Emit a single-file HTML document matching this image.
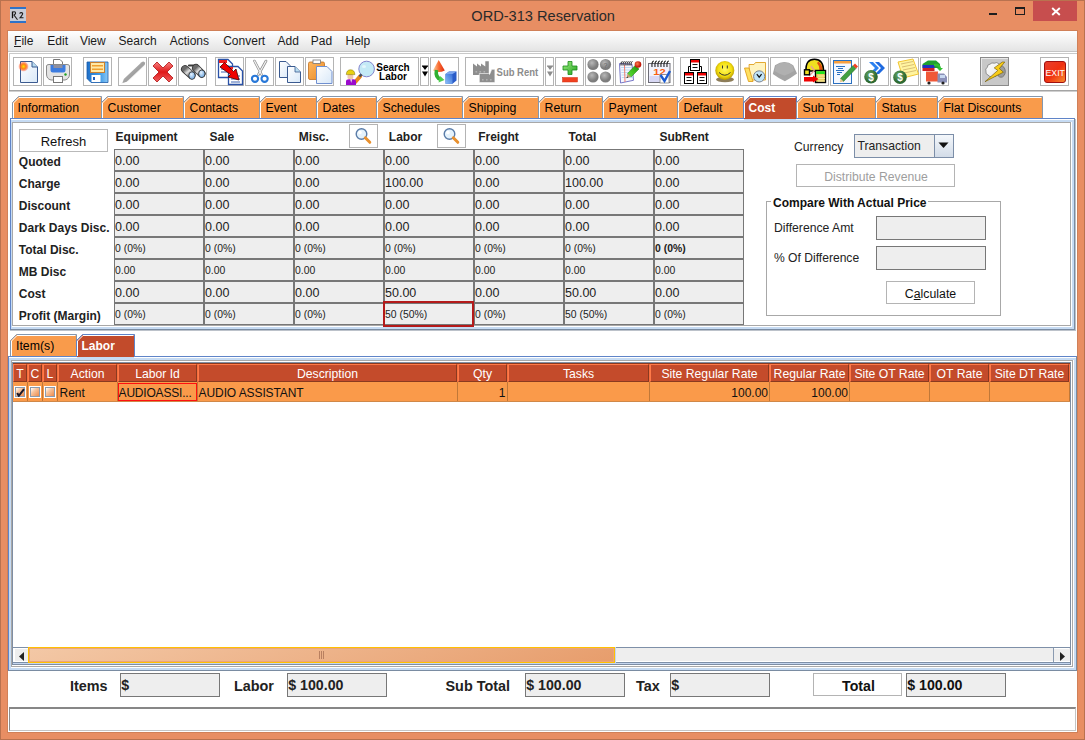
<!DOCTYPE html><html><head><meta charset="utf-8"><style>

*{box-sizing:border-box;margin:0;padding:0}
html,body{width:1085px;height:740px;overflow:hidden}
body{position:relative;background:#E88E63;font-family:"Liberation Sans",sans-serif;font-size:12px;color:#000}
.ab{position:absolute}
.t{position:absolute;white-space:nowrap;line-height:1}
.btn{position:absolute;border:1px solid #B4B4B4;background:#fff}

</style></head><body>
<div class="ab" style="left:0px;top:0px;width:1085px;height:1px;background:#B9724F"></div>
<div class="ab" style="left:0px;top:0px;width:1px;height:740px;background:#B9724F"></div>
<div class="ab" style="left:1084px;top:0px;width:1px;height:740px;background:#B9724F"></div>
<div class="ab" style="left:0px;top:739px;width:1085px;height:1px;background:#B9724F"></div>
<div class="ab" style="left:7px;top:30px;width:1px;height:703px;background:#D08058"></div>
<div class="ab" style="left:7px;top:30px;width:1071px;height:1px;background:#D08058"></div>
<div class="ab" style="left:1077px;top:30px;width:1px;height:703px;background:#D08058"></div>
<div class="ab" style="left:7px;top:732px;width:1071px;height:1px;background:#D08058"></div>
<svg class="ab" style="left:10px;top:7px" width="16" height="16" viewBox="0 0 16 16"><rect x="0" y="0" width="16" height="16" fill="#C8CCD6"/><rect x="0" y="0" width="16" height="2" fill="#2E72C8"/><rect x="0" y="14" width="16" height="2" fill="#2E72C8"/><path d="M2.5 4.5 V11.2" stroke="#111" stroke-width="1.3"/><path d="M2.8 5 Q6 4.2 5.5 6.8 L4 8 L7.5 12.8" fill="none" stroke="#222" stroke-width="1.1"/><path d="M9.5 6.5 Q11 4.8 12.6 6.2 Q13 7.5 10 10.8 H13.5" fill="none" stroke="#1A1A1A" stroke-width="1.1"/></svg>
<div class="t" style="left:471.3px;top:8.84px;font-size:14.6px;font-weight:400;color:#2A2A2A;">ORD-313 Reservation</div>
<div class="ab" style="left:989px;top:13px;width:8px;height:2px;background:#1E1E1E"></div>
<div class="ab" style="left:1015px;top:7px;width:10px;height:8px;border:1px solid #1E1E1E;border-top-width:2px"></div>
<div class="ab" style="left:1033px;top:1px;width:44px;height:20px;background:#C74E4E"></div>
<svg class="ab" style="left:1050px;top:6px" width="12" height="11" viewBox="0 0 12 11"><path d="M2.2 2 L9.8 9 M9.8 2 L2.2 9" stroke="#fff" stroke-width="1.9"/></svg>
<div class="ab" style="left:8px;top:31px;width:1069px;height:701px;background:#fff"></div>
<div class="ab" style="left:8px;top:31px;width:1069px;height:20px;background:linear-gradient(#FFFFFF,#E4E4E4)"></div>
<div class="ab" style="left:8px;top:51px;width:1069px;height:1px;background:#C4C4C4"></div>
<div class="t" style="left:14.1px;top:35.04px;font-size:12px;font-weight:400;color:#1A1A1A;">File</div>
<div class="t" style="left:47.300000000000004px;top:35.04px;font-size:12px;font-weight:400;color:#1A1A1A;">Edit</div>
<div class="t" style="left:79.9px;top:35.04px;font-size:12px;font-weight:400;color:#1A1A1A;">View</div>
<div class="t" style="left:118.60000000000001px;top:35.04px;font-size:12px;font-weight:400;color:#1A1A1A;">Search</div>
<div class="t" style="left:169.7px;top:35.04px;font-size:12px;font-weight:400;color:#1A1A1A;">Actions</div>
<div class="t" style="left:223.2px;top:35.04px;font-size:12px;font-weight:400;color:#1A1A1A;">Convert</div>
<div class="t" style="left:277.59999999999997px;top:35.04px;font-size:12px;font-weight:400;color:#1A1A1A;">Add</div>
<div class="t" style="left:310.8px;top:35.04px;font-size:12px;font-weight:400;color:#1A1A1A;">Pad</div>
<div class="t" style="left:345.5px;top:35.04px;font-size:12px;font-weight:400;color:#1A1A1A;">Help</div>
<div class="ab" style="left:14px;top:46px;width:7px;height:1px;background:#1A1A1A"></div>
<div class="ab" style="left:9px;top:53px;width:1068px;height:38px;border:1px solid #C9C9C9;border-right:none;border-bottom:none;background:#fff"></div>
<div class="ab" style="left:9px;top:90px;width:1068px;height:1px;background:#A4A4A4"></div>
<div class="ab" style="left:9px;top:91px;width:1068px;height:1px;background:#CFCFCF"></div>
<div class="ab" style="left:13px;top:57px;width:29px;height:29px;border:1px solid #B4B4B4;background:#fff"></div>
<div class="ab" style="left:43px;top:57px;width:29px;height:29px;border:1px solid #B4B4B4;background:#fff"></div>
<div class="ab" style="left:83px;top:57px;width:29px;height:29px;border:1px solid #B4B4B4;background:#fff"></div>
<div class="ab" style="left:118px;top:57px;width:29px;height:29px;border:1px solid #B4B4B4;background:#fff"></div>
<div class="ab" style="left:148px;top:57px;width:29px;height:29px;border:1px solid #B4B4B4;background:#fff"></div>
<div class="ab" style="left:178px;top:57px;width:29px;height:29px;border:1px solid #B4B4B4;background:#fff"></div>
<div class="ab" style="left:215px;top:57px;width:29px;height:29px;border:1px solid #B4B4B4;background:#fff"></div>
<div class="ab" style="left:245px;top:57px;width:29px;height:29px;border:1px solid #B4B4B4;background:#fff"></div>
<div class="ab" style="left:275px;top:57px;width:29px;height:29px;border:1px solid #B4B4B4;background:#fff"></div>
<div class="ab" style="left:305px;top:57px;width:29px;height:29px;border:1px solid #B4B4B4;background:#fff"></div>
<div class="ab" style="left:430px;top:57px;width:29px;height:29px;border:1px solid #B4B4B4;background:#fff"></div>
<div class="ab" style="left:555px;top:57px;width:29px;height:29px;border:1px solid #B4B4B4;background:#fff"></div>
<div class="ab" style="left:585px;top:57px;width:29px;height:29px;border:1px solid #B4B4B4;background:#fff"></div>
<div class="ab" style="left:615px;top:57px;width:29px;height:29px;border:1px solid #B4B4B4;background:#fff"></div>
<div class="ab" style="left:645px;top:57px;width:29px;height:29px;border:1px solid #B4B4B4;background:#fff"></div>
<div class="ab" style="left:680px;top:57px;width:29px;height:29px;border:1px solid #B4B4B4;background:#fff"></div>
<div class="ab" style="left:710px;top:57px;width:29px;height:29px;border:1px solid #B4B4B4;background:#fff"></div>
<div class="ab" style="left:740px;top:57px;width:29px;height:29px;border:1px solid #B4B4B4;background:#fff"></div>
<div class="ab" style="left:770px;top:57px;width:29px;height:29px;border:1px solid #B4B4B4;background:#fff"></div>
<div class="ab" style="left:800px;top:57px;width:29px;height:29px;border:1px solid #B4B4B4;background:#fff"></div>
<div class="ab" style="left:830px;top:57px;width:29px;height:29px;border:1px solid #B4B4B4;background:#fff"></div>
<div class="ab" style="left:860px;top:57px;width:29px;height:29px;border:1px solid #B4B4B4;background:#fff"></div>
<div class="ab" style="left:890px;top:57px;width:29px;height:29px;border:1px solid #B4B4B4;background:#fff"></div>
<div class="ab" style="left:920px;top:57px;width:29px;height:29px;border:1px solid #B4B4B4;background:#fff"></div>
<div class="ab" style="left:1040px;top:57px;width:29px;height:29px;border:1px solid #B4B4B4;background:#fff"></div>
<div class="ab" style="left:340px;top:57px;width:79px;height:29px;border:1px solid #B4B4B4;background:#fff"></div>
<div class="ab" style="left:420px;top:57px;width:9px;height:29px;border:1px solid #B4B4B4;background:#fff"></div>
<div class="ab" style="left:465px;top:57px;width:79px;height:29px;border:1px solid #B4B4B4;background:#fff"></div>
<div class="ab" style="left:545px;top:57px;width:9px;height:29px;border:1px solid #B4B4B4;background:#fff"></div>
<div class="ab" style="left:980px;top:57px;width:29px;height:29px;border:1px solid #8A8A8A;background:#C8C8C8;box-shadow:inset 1px 1px 0 #E8E8E8"></div>
<svg class="ab" style="left:0;top:0" width="1085" height="95" viewBox="0 0 1085 95">
<defs>
<linearGradient id="gPage" x1="0" y1="0" x2="1" y2="1"><stop offset="0" stop-color="#FFFFFF"/><stop offset="1" stop-color="#D8E8F8"/></linearGradient>
<radialGradient id="gStar"><stop offset="0" stop-color="#FFE000"/><stop offset="0.5" stop-color="#FF8020"/><stop offset="1" stop-color="#FF4020" stop-opacity="0.2"/></radialGradient>
<linearGradient id="gBlue" x1="0" y1="0" x2="1" y2="0"><stop offset="0" stop-color="#1E6FC8"/><stop offset="0.6" stop-color="#3C9AE8"/><stop offset="1" stop-color="#8CC8F4"/></linearGradient>
<linearGradient id="gRed" x1="0" y1="0" x2="0" y2="1"><stop offset="0" stop-color="#F88080"/><stop offset="0.5" stop-color="#E01818"/><stop offset="1" stop-color="#F06060"/></linearGradient>
<linearGradient id="gGray" x1="0" y1="0" x2="0" y2="1"><stop offset="0" stop-color="#A8A8A8"/><stop offset="1" stop-color="#7A7A7A"/></linearGradient>
<radialGradient id="gLens" cx="0.4" cy="0.35"><stop offset="0" stop-color="#E8F4FF"/><stop offset="1" stop-color="#88B8E8"/></radialGradient>
<radialGradient id="gBall" cx="0.4" cy="0.35"><stop offset="0" stop-color="#B8B8B8"/><stop offset="1" stop-color="#7C7C7C"/></radialGradient>
<radialGradient id="gSmile" cx="0.5" cy="0.45" r="0.55"><stop offset="0" stop-color="#FFF860"/><stop offset="0.65" stop-color="#F4E010"/><stop offset="1" stop-color="#B89800"/></radialGradient>
<radialGradient id="gCoin" cx="0.4" cy="0.35"><stop offset="0" stop-color="#6AAA6A"/><stop offset="1" stop-color="#2E6A32"/></radialGradient>
<linearGradient id="gExit" x1="0" y1="0" x2="1" y2="1"><stop offset="0" stop-color="#E84030"/><stop offset="0.5" stop-color="#F03010"/><stop offset="1" stop-color="#F89030"/></linearGradient>
<linearGradient id="gOrange" x1="0" y1="0" x2="1" y2="1"><stop offset="0" stop-color="#FFB860"/><stop offset="1" stop-color="#E88A28"/></linearGradient>
<linearGradient id="gGreen" x1="0" y1="0" x2="1" y2="1"><stop offset="0" stop-color="#A0F080"/><stop offset="1" stop-color="#20A020"/></linearGradient>
<linearGradient id="gPen" x1="0" y1="0" x2="1" y2="1"><stop offset="0" stop-color="#C8C8C8"/><stop offset="1" stop-color="#7E7E7E"/></linearGradient>
<linearGradient id="gBino" x1="0" y1="0" x2="1" y2="1"><stop offset="0" stop-color="#6A6A6A"/><stop offset="0.45" stop-color="#E0E0E0"/><stop offset="1" stop-color="#555"/></linearGradient>
<linearGradient id="gCloud" x1="0" y1="0" x2="1" y2="0"><stop offset="0" stop-color="#FFFFFF"/><stop offset="0.55" stop-color="#E8E8E8"/><stop offset="0.7" stop-color="#9A9A9A"/><stop offset="1" stop-color="#B8B8B8"/></linearGradient>
<linearGradient id="gCone" x1="0" y1="0" x2="1" y2="0"><stop offset="0" stop-color="#FFD0A0"/><stop offset="0.5" stop-color="#F86A30"/><stop offset="1" stop-color="#E02A10"/></linearGradient>
<linearGradient id="gCube" x1="0" y1="1" x2="1" y2="0"><stop offset="0" stop-color="#8CC0F8"/><stop offset="1" stop-color="#3A70D8"/></linearGradient>
<linearGradient id="gPencil" x1="0" y1="1" x2="1" y2="0"><stop offset="0" stop-color="#60E040"/><stop offset="0.5" stop-color="#40C020"/><stop offset="1" stop-color="#1E8A10"/></linearGradient>
<radialGradient id="gEraser" cx="0.4" cy="0.4"><stop offset="0" stop-color="#FF8050"/><stop offset="1" stop-color="#C01808"/></radialGradient>
<linearGradient id="gCloud2" x1="0" y1="0" x2="1" y2="1"><stop offset="0" stop-color="#FFFFFF"/><stop offset="0.6" stop-color="#F0F0F0"/><stop offset="1" stop-color="#C8C8C8"/></linearGradient>
</defs>
<path d="M20.5 61.5 H32 L37.5 67 V82.5 H20.5 Z" fill="url(#gPage)" stroke="#3A5A90" stroke-width="1"/>
<path d="M32 61.5 V67 H37.5" fill="#B8DCF0" stroke="#3A5A90" stroke-width="1"/>
<circle cx="23.5" cy="66.5" r="5" fill="url(#gStar)"/>
<path d="M53.5 59.5 H60 L62.5 62 V68 H53.5 Z" fill="#fff" stroke="#777" stroke-width="1"/>
<path d="M46.5 66 Q46.5 64.5 49 64.5 H67 Q69.5 64.5 69.5 66 V74 Q69.5 79 65 80 H51 Q46.5 79 46.5 74 Z" fill="#E4E4E4" stroke="#8A8A8A" stroke-width="1"/>
<path d="M50.5 65 H65.5 V70 Q65.5 72.5 63 72.5 H53 Q50.5 72.5 50.5 70 Z" fill="#3C7CE0"/>
<rect x="53.5" y="65" width="9" height="3" fill="#9090A0"/>
<rect x="53.5" y="76.5" width="9" height="6" fill="#fff" stroke="#777" stroke-width="1"/>
<circle cx="65.5" cy="74.5" r="1.2" fill="#20A020"/>
<path d="M87 62 H108 V82.5 H91 L87 78.5 Z" fill="url(#gBlue)" stroke="#1A5AA8" stroke-width="0.8"/>
<rect x="90.5" y="62.5" width="14" height="10" fill="#FFE9A8" stroke="#C88030" stroke-width="1"/>
<rect x="92" y="65" width="11" height="1.5" fill="#F0A030"/><rect x="92" y="68.5" width="11" height="1.5" fill="#F0A030"/>
<rect x="91.5" y="75" width="9" height="7" fill="#fff"/><rect x="93" y="77" width="2" height="3" fill="#1E60C0"/>
<path d="M121 84 L125 78 L141 63 Q143 61.5 144.5 63 Q146 64.5 144.5 66 L128.5 81 Z" fill="#E4E4E4" opacity="0.6"/>
<path d="M122.5 83 L123.8 79 L141.6 62.2 Q143.4 60.8 144.6 62.2 Q145.8 63.6 144.4 65 L126.6 81.8 Z" fill="url(#gPen)"/>
<path d="M153 66 L157 62 L163 68 L169 62 L173 66 L167 72 L173 78 L169 82 L163 76 L157 82 L153 78 L159 72 Z" fill="url(#gRed)" stroke="#B01010" stroke-width="0.8"/>
<path d="M185 69.2 L191.5 75" stroke="#333" stroke-width="8" stroke-linecap="round"/>
<path d="M185 69.2 L191.5 75" stroke="url(#gBino)" stroke-width="6.4" stroke-linecap="round"/>
<path d="M189 65.5 L197 65.5" stroke="#3A3A3A" stroke-width="2.2" stroke-linecap="round"/>
<path d="M196 68 L201.5 73.5" stroke="#333" stroke-width="8" stroke-linecap="round"/>
<path d="M196 68 L201.5 73.5" stroke="url(#gBino)" stroke-width="6.4" stroke-linecap="round"/>
<ellipse cx="192" cy="75.6" rx="3.2" ry="3.8" fill="url(#gLens)" stroke="#2A2A2A" stroke-width="0.8"/>
<ellipse cx="201.8" cy="73.8" rx="3.2" ry="3.8" fill="url(#gLens)" stroke="#2A2A2A" stroke-width="0.8"/>
<path d="M218.5 59.5 H228 L232.5 64 V77.5 H218.5 Z" fill="#fff" stroke="#2A52A8" stroke-width="1.3"/>
<rect x="219" y="60" width="8" height="3" fill="#F02020"/>
<path d="M221 66 H229 M221 69 H229 M221 72 H227" stroke="#2A52A8" stroke-width="0.9"/>
<path d="M228.5 66.5 H238 L242.5 71 V84.5 H228.5 Z" fill="#fff" stroke="#2A52A8" stroke-width="1.3"/>
<rect x="229" y="67" width="4" height="2.5" fill="#F02020"/>
<path d="M231 76 H240 M231 79 H240 M231 82 H240" stroke="#2A52A8" stroke-width="0.9"/>
<path d="M220 67 L224.5 62.5 L233.5 71.5 L236 69 L239 80 L228 77 L230.5 74.5 Z" fill="#F00000" stroke="#400" stroke-width="0.8"/>
<path d="M254.5 61 L261.5 74.5 M266 61 L258.5 74.5" stroke="#8C8C8C" stroke-width="2.6" stroke-linecap="round"/>
<path d="M254.5 61 L261.5 74.5 M266 61 L258.5 74.5" stroke="#F4F4F4" stroke-width="1.2" stroke-linecap="round"/>
<circle cx="255" cy="78.8" r="3.1" fill="none" stroke="#2878D8" stroke-width="2.1"/>
<circle cx="264.6" cy="78.8" r="3.1" fill="none" stroke="#2878D8" stroke-width="2.1"/>
<path d="M279.5 61.5 H286 L290 65.5 V77.5 H279.5 Z" fill="url(#gPage)" stroke="#3A5A90" stroke-width="1"/>
<path d="M287.5 66.5 H295 L300.5 72 V82.5 H287.5 Z" fill="url(#gPage)" stroke="#3A5A90" stroke-width="1"/>
<path d="M295 66.5 V72 H300.5" fill="#B8DCF0" stroke="#3A5A90" stroke-width="0.8"/>
<rect x="308.5" y="62" width="16" height="17.5" rx="1.5" fill="url(#gOrange)" stroke="#C07020" stroke-width="0.8"/>
<rect x="313" y="60" width="7.5" height="3.5" fill="#fff" stroke="#777" stroke-width="0.8"/>
<path d="M316.5 66.5 H327 L332 71.5 V83.5 H316.5 Z" fill="url(#gPage)" stroke="#7090D0" stroke-width="1"/>
<circle cx="366.6" cy="69" r="7.8" fill="#C4EAF6" stroke="#7878C8" stroke-width="0.9"/>
<ellipse cx="364" cy="66.5" rx="2" ry="1.5" fill="#E4F6FC"/>
<path d="M355 82.3 L360.2 76.3" stroke="#E8861E" stroke-width="4" stroke-linecap="round"/>
<path d="M359.5 76.5 L361.5 74.3" stroke="#445060" stroke-width="2.4"/>
<path d="M346 85 V81.2 Q346 79.2 349 79.2 H353.5 Q356 79.2 356 81.2 V85 Z" fill="#9A0ACC"/>
<path d="M350.2 79.3 L351.2 83 L352.2 79.3 Z" fill="#E8E8E8"/>
<rect x="347.5" y="74" width="5.8" height="5" rx="1.5" fill="#F0C8A8"/>
<path d="M346.3 74.6 Q346.5 69.8 350.5 69.8 Q354.6 69.8 354.9 74.6 Z" fill="#E8D010" stroke="#807000" stroke-width="0.5"/>
<text x="393" y="70.6" font-family="Liberation Sans" font-weight="bold" font-size="10" text-anchor="middle" fill="#000">Search</text>
<text x="393" y="79.6" font-family="Liberation Sans" font-weight="bold" font-size="10" text-anchor="middle" fill="#000">Labor</text>
<path d="M422 66 H428 L425 70 Z M422 71.5 H428 L425 76.5 Z" fill="#000"/>
<rect x="422" y="65.5" width="6" height="1" fill="#000"/>
<path d="M438.7 60 L444.8 70.5 Q438.7 73.5 433 70.5 Z" fill="url(#gCone)"/>
<path d="M436.5 70 Q435 77.5 441 79.5" fill="none" stroke="#30B030" stroke-width="3.6"/>
<path d="M440 76 L444.5 80 L438.5 82.5 Z" fill="#50D050"/>
<path d="M445.5 74 L449 71.5 H456.5 V80.5 L452.5 83.8 H445.5 Z" fill="#2A5CC8"/>
<path d="M445.5 74 H452.5 V83.8 H445.5 Z" fill="url(#gCube)"/>
<path d="M445.5 74 L449 71.5 H456.5 L452.5 74 Z" fill="#7EA8F0"/>
<path d="M473 75 V63.4 L477 66.6 V63.4 L481 66.6 V63.4 L485.3 66.6 V61.2 H488.8 V75 Z" fill="#8E8E8E"/>
<path d="M479.3 82.6 V73.5 L488.6 73.5 L489.6 74.4 L491.7 69.3 H494.9 V82.6 Z" fill="#8E8E8E" stroke="#fff" stroke-width="0.6"/>
<rect x="475.5" y="71" width="1.6" height="1.6" fill="#B0B0B0"/>
<rect x="479.5" y="71" width="1.6" height="1.6" fill="#B0B0B0"/>
<rect x="483.5" y="71" width="1.6" height="1.6" fill="#B0B0B0"/>
<rect x="482" y="79" width="1.6" height="1.6" fill="#B0B0B0"/>
<rect x="486" y="79" width="1.6" height="1.6" fill="#B0B0B0"/>
<rect x="490" y="79" width="1.6" height="1.6" fill="#B0B0B0"/>
<text x="496.6" y="76.2" font-family="Liberation Sans" font-weight="bold" font-size="10.5" fill="#8C8C8C" textLength="41.6" lengthAdjust="spacingAndGlyphs">Sub Rent</text>
<path d="M547 66 H553 L550 70 Z M547 71.5 H553 L550 76.5 Z" fill="#8C8C8C"/>
<rect x="547" y="65.5" width="6" height="1" fill="#8C8C8C"/>
<path d="M568 61.5 H572 V66 H577 V70 H572 V74.5 H568 V70 H563 V66 H568 Z" fill="url(#gGreen)" stroke="#1A8A1A" stroke-width="0.8"/>
<rect x="562.5" y="77.5" width="15" height="4.5" fill="#F04020" stroke="#D03010" stroke-width="0.5"/>
<circle cx="593" cy="64.5" r="5.6" fill="url(#gBall)"/>
<circle cx="605.5" cy="64.5" r="5.6" fill="url(#gBall)"/>
<circle cx="593" cy="77" r="5.6" fill="url(#gBall)"/>
<circle cx="605.5" cy="77" r="5.6" fill="url(#gBall)"/>
<text x="605.5" y="67.5" font-family="Liberation Sans" font-size="7" text-anchor="middle" fill="#666">?</text>
<path d="M619.5 63.5 L632 64.3 L633.5 80.3 L620.5 83 Z" fill="#F6F8FF" stroke="#7878C8" stroke-width="1"/>
<path d="M621 67.5 H632 M621.2 70 H632.3 M621.4 72.5 H632.5 M621.6 75 H632.8 M621.8 77.5 H633" stroke="#B0D4F0" stroke-width="0.8"/>
<path d="M624.5 65 L625 82" stroke="#F07060" stroke-width="0.9"/>
<path d="M621 65.5 Q620.5 61.5 622.5 61.5" fill="none" stroke="#1A1A1A" stroke-width="1"/>
<path d="M623 65.5 Q622.5 61.5 624.5 61.5" fill="none" stroke="#1A1A1A" stroke-width="1"/>
<path d="M625 65.5 Q624.5 61.5 626.5 61.5" fill="none" stroke="#1A1A1A" stroke-width="1"/>
<path d="M627 65.5 Q626.5 61.5 628.5 61.5" fill="none" stroke="#1A1A1A" stroke-width="1"/>
<path d="M629 65.5 Q628.5 61.5 630.5 61.5" fill="none" stroke="#1A1A1A" stroke-width="1"/>
<path d="M631 65.5 Q630.5 61.5 632.5 61.5" fill="none" stroke="#1A1A1A" stroke-width="1"/>
<path d="M627.5 73.5 L635 65.5 L639 69 L631 77 Z" fill="url(#gPencil)" stroke="#1E7A10" stroke-width="0.5"/>
<path d="M627.5 73.5 L631 77 L626.5 78 Z" fill="#C8A070"/>
<path d="M626.3 78.2 L627.2 76.4 L628.2 77.5 Z" fill="#222"/>
<circle cx="638" cy="64.5" r="3.3" fill="url(#gEraser)"/>
<rect x="648.5" y="63.5" width="21.5" height="19" fill="#F2F2FC" stroke="#6E6E78" stroke-width="1"/>
<rect x="649.5" y="76" width="10" height="6" fill="#D8D8F4"/>
<path d="M652 67 Q651.5 61 654 61" fill="none" stroke="#222" stroke-width="1.1"/>
<path d="M655 67 Q654.5 61 657 61" fill="none" stroke="#222" stroke-width="1.1"/>
<path d="M658 67 Q657.5 61 660 61" fill="none" stroke="#222" stroke-width="1.1"/>
<path d="M661 67 Q660.5 61 663 61" fill="none" stroke="#222" stroke-width="1.1"/>
<path d="M664 67 Q663.5 61 666 61" fill="none" stroke="#222" stroke-width="1.1"/>
<path d="M667 67 Q666.5 61 669 61" fill="none" stroke="#222" stroke-width="1.1"/>
<text x="659.5" y="75.2" font-family="Liberation Sans" font-weight="bold" font-size="9.5" text-anchor="middle" fill="#F86010" textLength="12.5" lengthAdjust="spacingAndGlyphs">12</text>
<rect x="660" y="74.5" width="9" height="8.5" fill="#fff" stroke="#808080" stroke-width="0.8"/>
<path d="M660.5 75 L664.5 81 L670 71" fill="none" stroke="#1A5AD0" stroke-width="2.4"/>
<path d="M688.5 73 V66.5 H701.5 V73" fill="none" stroke="#000" stroke-width="1"/>
<rect x="690.5" y="59.5" width="9" height="11" fill="#fff" stroke="#000" stroke-width="1"/>
<rect x="691.0" y="60.0" width="8" height="2.5" fill="#F00000"/>
<path d="M692.5 64.5 H697.5 M692.5 67.5 H697.5" stroke="#111" stroke-width="1"/>
<rect x="684.5" y="72.5" width="9" height="11" fill="#fff" stroke="#000" stroke-width="1"/>
<rect x="685.0" y="73.0" width="8" height="2.5" fill="#F00000"/>
<path d="M686.5 77.5 H691.5 M686.5 80.5 H691.5" stroke="#111" stroke-width="1"/>
<rect x="697.5" y="72.5" width="9" height="11" fill="#fff" stroke="#000" stroke-width="1"/>
<rect x="698.0" y="73.0" width="8" height="2.5" fill="#F00000"/>
<path d="M699.5 77.5 H704.5 M699.5 80.5 H704.5" stroke="#111" stroke-width="1"/>
<ellipse cx="725" cy="79.5" rx="9" ry="2.8" fill="#503800" opacity="0.65"/>
<circle cx="724.8" cy="70.4" r="9.5" fill="url(#gSmile)"/>
<path d="M722.5 65.5 V68.5 M727.3 65.5 V68.5" stroke="#333" stroke-width="1"/>
<path d="M719 72.5 Q724.8 78 730.5 72.5" fill="none" stroke="#333" stroke-width="1"/>
<path d="M749 64.5 H754 L755.5 62.5 H765.5 V80 H750 Z" fill="#FFF4C0" stroke="#E0A020" stroke-width="0.9"/>
<path d="M744.5 68 H749 L753 81.5 H748.5 Z" fill="#FFE060" stroke="#E0A020" stroke-width="0.9"/>
<circle cx="759.2" cy="76.4" r="5.6" fill="#C0E4F8" stroke="#707888" stroke-width="0.9"/>
<path d="M756.8 74.2 L759.2 77.2 L761.6 74.2" fill="none" stroke="#111" stroke-width="1.2"/>
<path d="M775 65.3 Q780 62 784.4 62 Q789 62 793.2 65.3 L797 73.6 Q791 78 784.9 81.3 Q778 78 772.8 74.1 Z" fill="#A4A4A4"/>
<path d="M776 65.5 Q780 62.5 784.4 62.5 Q789 62.5 792.5 65.5 L794 71 Q789 74 784.5 75.5 Q779 74 774.5 71 Z" fill="#B0B0B0"/>
<path d="M806 71 Q805.5 59.2 814.5 59.2 Q823.5 59.2 823.5 71 Z" fill="#F0E020" stroke="#000" stroke-width="1.6"/>
<path d="M818.5 61.5 Q822.5 64.5 822.5 70 L819.5 70 Q819.5 65.5 817 63 Z" fill="#E05010"/>
<path d="M811 66 L814.5 70.5 L809 76" fill="none" stroke="#E8A098" stroke-width="1.3"/>
<rect x="804.5" y="69.8" width="5" height="5" fill="#F0E020" stroke="#000" stroke-width="1.4"/>
<rect x="815.5" y="70.5" width="10" height="12" fill="#E8D060" stroke="#000" stroke-width="1.4"/>
<rect x="816.2" y="71.2" width="8.6" height="2.8" fill="#20E020"/>
<path d="M818 76 H825 M818 78.5 H825 M818 81 H825" stroke="#F8E8A0" stroke-width="1"/>
<path d="M804 77 H813 V75.5 L818.5 79 L813 82.5 V81.5 H804 Z" fill="#F00000"/>
<rect x="833.5" y="60.5" width="18" height="23" fill="#F4F8FF" stroke="#2A70C0" stroke-width="1"/>
<rect x="834" y="61" width="17" height="2.5" fill="#F8A040"/>
<path d="M836 66.5 H845 M838 68.5 H843 M836 70.5 H844 M837 72.5 H842 M837 74.5 H840" stroke="#2A70C0" stroke-width="1"/>
<path d="M840.5 78.5 L853 65.5 L856 68.5 L843.5 81.5 Z" fill="#40A040" stroke="#206020" stroke-width="0.5"/>
<path d="M840.5 78.5 L843.5 81.5 L839.8 82.3 Z" fill="#E8C890"/>
<path d="M853 65.5 L855 63.5 L858 66.5 L856 68.5 Z" fill="#F04020"/>
<path d="M875 62 L879 62 L885 68 L879 74 L875 74 L881 68 Z" fill="#1E6AE0"/>
<path d="M869 62 L873 62 L879 68 L873 74 L869 74 L875 68 Z" fill="#2A80F0"/>
<circle cx="871" cy="76.8" r="6.8" fill="url(#gCoin)"/>
<text x="871" y="80.5" font-family="Liberation Sans" font-weight="bold" font-size="10" text-anchor="middle" fill="#fff">$</text>
<path d="M898 62 L913 59 L918.5 74 L903 78 Z" fill="#FFF4A0" stroke="#F0C020" stroke-width="0.9"/>
<path d="M901 64 L913 61.5 M902 67 L914 64.5 M903 70 L915 67.5 M904 73 L916 70.5" stroke="#C8A860" stroke-width="0.7"/>
<circle cx="900" cy="77.2" r="6.8" fill="url(#gCoin)"/>
<text x="900" y="81" font-family="Liberation Sans" font-weight="bold" font-size="10" text-anchor="middle" fill="#fff">$</text>
<path d="M922.5 64 L928 60.5 H936 L940 64 V68 H922.5 Z" fill="#20A030"/>
<rect x="922.5" y="65" width="12" height="3" fill="#2030C0"/>
<rect x="922.5" y="68" width="12" height="3" fill="#D02020"/>
<path d="M934 64 Q940 63 941 68 L943 68 L940 71 L937 68 L939 68 Q938 66 934 66 Z" fill="#30C030"/>
<rect x="926" y="71.5" width="12" height="10" fill="#F05838"/>
<path d="M937.5 73.5 H944 L947 77 V82.5 H937.5 Z" fill="#8A90B8"/>
<rect x="940" y="75" width="5" height="3" fill="#C8D8F0"/>
<circle cx="929" cy="83" r="1.6" fill="#222"/><circle cx="943" cy="83" r="1.6" fill="#222"/>
<ellipse cx="1001" cy="71.5" rx="4.3" ry="5.8" fill="#9C9C9C" stroke="#555" stroke-width="0.6"/>
<path d="M987.5 67 Q987 64.5 990 64.2 Q991.5 62.3 994.5 63.2 Q996.5 61.8 998.5 63.5 Q1000.5 64.5 999.5 67.5 L998 74 Q996.5 77 993 76.8 Q989.5 77.5 988 75 Q985.3 74 986 71.5 Q984.8 69 987.5 67 Z" fill="url(#gCloud2)" stroke="#555" stroke-width="0.6"/>
<path d="M1002.3 62 H1004.8 L999.4 68.6 L1003.4 72.2 L985 81.7 L997.8 70.4 L994.2 67.9 Z" fill="#F8CC18" stroke="#6A5200" stroke-width="0.6" stroke-linejoin="round"/>
<rect x="1044.5" y="61.5" width="21" height="21" rx="2.5" fill="url(#gExit)" stroke="#A01010" stroke-width="1"/>
<text x="1055.2" y="75.8" font-family="Liberation Sans" font-size="9" text-anchor="middle" fill="#fff" textLength="19.4" lengthAdjust="spacingAndGlyphs">EXIT</text>
</svg>
<div class="ab" style="left:10px;top:118px;width:1065px;height:212px;background:#C6DBF3;border-left:1px solid #5F84C8;border-top:1px solid #5F84C8;border-right:1px solid #7A8CA2;border-bottom:1px solid #7A8CA2"></div>
<div class="ab" style="left:11px;top:119px;width:1063px;height:1px;background:#fff"></div>
<div class="ab" style="left:10px;top:330px;width:1066px;height:1px;background:#BCC2CA"></div>
<div class="ab" style="left:1075px;top:119px;width:1px;height:212px;background:#BCC2CA"></div>
<div class="ab" style="left:12px;top:122px;width:1060px;height:205px;background:#fff"></div>
<div class="ab" style="left:12px;top:122px;width:1059px;height:204px;border:1px solid #A8A8A8;background:#fff"></div>
<svg class="ab" style="left:12px;top:96px" width="90" height="22" viewBox="0 0 90 22"><path d="M0.5 22 V6.5 L6.5 0.5 H89.5 V22" fill="#F99B4B" stroke="#8497AE" stroke-width="1"/><path d="M1.5 22 V7 L7 1.5 H88.5" fill="none" stroke="#FFFFFF" stroke-width="1"/></svg>
<div class="t" style="left:17.5px;top:101.79px;font-size:12.3px;font-weight:400;color:#000;">Information</div>
<svg class="ab" style="left:101px;top:96px" width="83" height="22" viewBox="0 0 83 22"><path d="M0.5 22 V6.5 L6.5 0.5 H82.5 V22" fill="#F99B4B" stroke="#8497AE" stroke-width="1"/><path d="M1.5 22 V7 L7 1.5 H81.5" fill="none" stroke="#FFFFFF" stroke-width="1"/></svg>
<div class="t" style="left:107.5px;top:101.79px;font-size:12.3px;font-weight:400;color:#000;">Customer</div>
<svg class="ab" style="left:183px;top:96px" width="77" height="22" viewBox="0 0 77 22"><path d="M0.5 22 V6.5 L6.5 0.5 H76.5 V22" fill="#F99B4B" stroke="#8497AE" stroke-width="1"/><path d="M1.5 22 V7 L7 1.5 H75.5" fill="none" stroke="#FFFFFF" stroke-width="1"/></svg>
<div class="t" style="left:189.5px;top:101.79px;font-size:12.3px;font-weight:400;color:#000;">Contacts</div>
<svg class="ab" style="left:259px;top:96px" width="58" height="22" viewBox="0 0 58 22"><path d="M0.5 22 V6.5 L6.5 0.5 H57.5 V22" fill="#F99B4B" stroke="#8497AE" stroke-width="1"/><path d="M1.5 22 V7 L7 1.5 H56.5" fill="none" stroke="#FFFFFF" stroke-width="1"/></svg>
<div class="t" style="left:265.5px;top:101.79px;font-size:12.3px;font-weight:400;color:#000;">Event</div>
<svg class="ab" style="left:316px;top:96px" width="61" height="22" viewBox="0 0 61 22"><path d="M0.5 22 V6.5 L6.5 0.5 H60.5 V22" fill="#F99B4B" stroke="#8497AE" stroke-width="1"/><path d="M1.5 22 V7 L7 1.5 H59.5" fill="none" stroke="#FFFFFF" stroke-width="1"/></svg>
<div class="t" style="left:322.5px;top:101.79px;font-size:12.3px;font-weight:400;color:#000;">Dates</div>
<svg class="ab" style="left:376px;top:96px" width="87" height="22" viewBox="0 0 87 22"><path d="M0.5 22 V6.5 L6.5 0.5 H86.5 V22" fill="#F99B4B" stroke="#8497AE" stroke-width="1"/><path d="M1.5 22 V7 L7 1.5 H85.5" fill="none" stroke="#FFFFFF" stroke-width="1"/></svg>
<div class="t" style="left:382.5px;top:101.79px;font-size:12.3px;font-weight:400;color:#000;">Schedules</div>
<svg class="ab" style="left:462px;top:96px" width="77" height="22" viewBox="0 0 77 22"><path d="M0.5 22 V6.5 L6.5 0.5 H76.5 V22" fill="#F99B4B" stroke="#8497AE" stroke-width="1"/><path d="M1.5 22 V7 L7 1.5 H75.5" fill="none" stroke="#FFFFFF" stroke-width="1"/></svg>
<div class="t" style="left:468.5px;top:101.79px;font-size:12.3px;font-weight:400;color:#000;">Shipping</div>
<svg class="ab" style="left:538px;top:96px" width="65" height="22" viewBox="0 0 65 22"><path d="M0.5 22 V6.5 L6.5 0.5 H64.5 V22" fill="#F99B4B" stroke="#8497AE" stroke-width="1"/><path d="M1.5 22 V7 L7 1.5 H63.5" fill="none" stroke="#FFFFFF" stroke-width="1"/></svg>
<div class="t" style="left:544.5px;top:101.79px;font-size:12.3px;font-weight:400;color:#000;">Return</div>
<svg class="ab" style="left:602px;top:96px" width="76" height="22" viewBox="0 0 76 22"><path d="M0.5 22 V6.5 L6.5 0.5 H75.5 V22" fill="#F99B4B" stroke="#8497AE" stroke-width="1"/><path d="M1.5 22 V7 L7 1.5 H74.5" fill="none" stroke="#FFFFFF" stroke-width="1"/></svg>
<div class="t" style="left:608.5px;top:101.79px;font-size:12.3px;font-weight:400;color:#000;">Payment</div>
<svg class="ab" style="left:677px;top:96px" width="67" height="22" viewBox="0 0 67 22"><path d="M0.5 22 V6.5 L6.5 0.5 H66.5 V22" fill="#F99B4B" stroke="#8497AE" stroke-width="1"/><path d="M1.5 22 V7 L7 1.5 H65.5" fill="none" stroke="#FFFFFF" stroke-width="1"/></svg>
<div class="t" style="left:683.5px;top:101.79px;font-size:12.3px;font-weight:400;color:#000;">Default</div>
<svg class="ab" style="left:743px;top:96px" width="54" height="23" viewBox="0 0 54 23"><path d="M0.5 23 V6.5 L6.5 0.5 H53.5 V23" fill="#C24B2B" stroke="#5F84C8" stroke-width="1"/><path d="M1.5 23 V7 L7 1.5 H52.5" fill="none" stroke="#FFFFFF" stroke-width="1"/></svg>
<div class="t" style="left:748.5px;top:102.04px;font-size:12px;font-weight:700;color:#fff;">Cost</div>
<div class="ab" style="left:744px;top:118px;width:52px;height:1px;background:#C24B2B"></div>
<div class="ab" style="left:744px;top:119px;width:52px;height:3px;background:#C6DBF3"></div>
<svg class="ab" style="left:796px;top:96px" width="80" height="22" viewBox="0 0 80 22"><path d="M0.5 22 V6.5 L6.5 0.5 H79.5 V22" fill="#F99B4B" stroke="#8497AE" stroke-width="1"/><path d="M1.5 22 V7 L7 1.5 H78.5" fill="none" stroke="#FFFFFF" stroke-width="1"/></svg>
<div class="t" style="left:802.5px;top:101.79px;font-size:12.3px;font-weight:400;color:#000;">Sub Total</div>
<svg class="ab" style="left:875px;top:96px" width="63" height="22" viewBox="0 0 63 22"><path d="M0.5 22 V6.5 L6.5 0.5 H62.5 V22" fill="#F99B4B" stroke="#8497AE" stroke-width="1"/><path d="M1.5 22 V7 L7 1.5 H61.5" fill="none" stroke="#FFFFFF" stroke-width="1"/></svg>
<div class="t" style="left:881.5px;top:101.79px;font-size:12.3px;font-weight:400;color:#000;">Status</div>
<svg class="ab" style="left:937px;top:96px" width="106" height="22" viewBox="0 0 106 22"><path d="M0.5 22 V6.5 L6.5 0.5 H105.5 V22" fill="#F99B4B" stroke="#8497AE" stroke-width="1"/><path d="M1.5 22 V7 L7 1.5 H104.5" fill="none" stroke="#FFFFFF" stroke-width="1"/></svg>
<div class="t" style="left:943.5px;top:101.79px;font-size:12.3px;font-weight:400;color:#000;">Flat Discounts</div>
<div class="ab" style="left:19px;top:129px;width:89px;height:23px;border:1px solid #B9B9B9;background:#fff"></div>
<div class="t" style="left:19.0px;width:89px;text-align:center;top:135.20px;font-size:13px;font-weight:400;color:#111;">Refresh</div>
<div class="t" style="left:115.60000000000001px;top:131.04px;font-size:12px;font-weight:700;color:#222;">Equipment</div>
<div class="t" style="left:209.4px;top:131.04px;font-size:12px;font-weight:700;color:#222;">Sale</div>
<div class="t" style="left:298.79999999999995px;top:131.04px;font-size:12px;font-weight:700;color:#222;">Misc.</div>
<div class="t" style="left:388.79999999999995px;top:131.04px;font-size:12px;font-weight:700;color:#222;">Labor</div>
<div class="t" style="left:478.2px;top:131.04px;font-size:12px;font-weight:700;color:#222;">Freight</div>
<div class="t" style="left:568.6px;top:131.04px;font-size:12px;font-weight:700;color:#222;">Total</div>
<div class="t" style="left:659.4px;top:131.04px;font-size:12px;font-weight:700;color:#222;">SubRent</div>
<div class="ab" style="left:349px;top:124px;width:29px;height:24px;border:1px solid #B4B4B4;background:#fff"></div>
<svg class="ab" style="left:354px;top:127px" width="19" height="18" viewBox="0 0 19 18"><circle cx="7.5" cy="7" r="5.3" fill="#E4F2FC" stroke="#5A7CA8" stroke-width="1.4"/><circle cx="6" cy="5.5" r="1.8" fill="#fff"/><path d="M11.3 10.8 L15.8 15.3" stroke="#E8902E" stroke-width="3" stroke-linecap="round"/></svg>
<div class="ab" style="left:437px;top:124px;width:29px;height:24px;border:1px solid #B4B4B4;background:#fff"></div>
<svg class="ab" style="left:442px;top:127px" width="19" height="18" viewBox="0 0 19 18"><circle cx="7.5" cy="7" r="5.3" fill="#E4F2FC" stroke="#5A7CA8" stroke-width="1.4"/><circle cx="6" cy="5.5" r="1.8" fill="#fff"/><path d="M11.3 10.8 L15.8 15.3" stroke="#E8902E" stroke-width="3" stroke-linecap="round"/></svg>
<div class="t" style="left:18.8px;top:156.04px;font-size:12px;font-weight:700;color:#222;">Quoted</div>
<div class="ab" style="left:114px;top:149px;width:90px;height:22px;border:1px solid #777;background:#EEEEEE"></div>
<div class="t" style="left:115px;top:154.62px;font-size:12.5px;font-weight:400;color:#222;">0.00</div>
<div class="ab" style="left:204px;top:149px;width:90px;height:22px;border:1px solid #777;background:#EEEEEE"></div>
<div class="t" style="left:205px;top:154.62px;font-size:12.5px;font-weight:400;color:#222;">0.00</div>
<div class="ab" style="left:294px;top:149px;width:90px;height:22px;border:1px solid #777;background:#EEEEEE"></div>
<div class="t" style="left:295px;top:154.62px;font-size:12.5px;font-weight:400;color:#222;">0.00</div>
<div class="ab" style="left:384px;top:149px;width:90px;height:22px;border:1px solid #777;background:#EEEEEE"></div>
<div class="t" style="left:385px;top:154.62px;font-size:12.5px;font-weight:400;color:#222;">0.00</div>
<div class="ab" style="left:474px;top:149px;width:90px;height:22px;border:1px solid #777;background:#EEEEEE"></div>
<div class="t" style="left:475px;top:154.62px;font-size:12.5px;font-weight:400;color:#222;">0.00</div>
<div class="ab" style="left:564px;top:149px;width:90px;height:22px;border:1px solid #777;background:#EEEEEE"></div>
<div class="t" style="left:565px;top:154.62px;font-size:12.5px;font-weight:400;color:#222;">0.00</div>
<div class="ab" style="left:654px;top:149px;width:90px;height:22px;border:1px solid #777;background:#EEEEEE"></div>
<div class="t" style="left:655px;top:154.62px;font-size:12.5px;font-weight:400;color:#222;">0.00</div>
<div class="t" style="left:18.8px;top:178.04px;font-size:12px;font-weight:700;color:#222;">Charge</div>
<div class="ab" style="left:114px;top:171px;width:90px;height:22px;border:1px solid #777;background:#EEEEEE"></div>
<div class="t" style="left:115px;top:176.62px;font-size:12.5px;font-weight:400;color:#222;">0.00</div>
<div class="ab" style="left:204px;top:171px;width:90px;height:22px;border:1px solid #777;background:#EEEEEE"></div>
<div class="t" style="left:205px;top:176.62px;font-size:12.5px;font-weight:400;color:#222;">0.00</div>
<div class="ab" style="left:294px;top:171px;width:90px;height:22px;border:1px solid #777;background:#EEEEEE"></div>
<div class="t" style="left:295px;top:176.62px;font-size:12.5px;font-weight:400;color:#222;">0.00</div>
<div class="ab" style="left:384px;top:171px;width:90px;height:22px;border:1px solid #777;background:#EEEEEE"></div>
<div class="t" style="left:385px;top:176.62px;font-size:12.5px;font-weight:400;color:#222;">100.00</div>
<div class="ab" style="left:474px;top:171px;width:90px;height:22px;border:1px solid #777;background:#EEEEEE"></div>
<div class="t" style="left:475px;top:176.62px;font-size:12.5px;font-weight:400;color:#222;">0.00</div>
<div class="ab" style="left:564px;top:171px;width:90px;height:22px;border:1px solid #777;background:#EEEEEE"></div>
<div class="t" style="left:565px;top:176.62px;font-size:12.5px;font-weight:400;color:#222;">100.00</div>
<div class="ab" style="left:654px;top:171px;width:90px;height:22px;border:1px solid #777;background:#EEEEEE"></div>
<div class="t" style="left:655px;top:176.62px;font-size:12.5px;font-weight:400;color:#222;">0.00</div>
<div class="t" style="left:18.8px;top:200.04px;font-size:12px;font-weight:700;color:#222;">Discount</div>
<div class="ab" style="left:114px;top:193px;width:90px;height:22px;border:1px solid #777;background:#EEEEEE"></div>
<div class="t" style="left:115px;top:198.62px;font-size:12.5px;font-weight:400;color:#222;">0.00</div>
<div class="ab" style="left:204px;top:193px;width:90px;height:22px;border:1px solid #777;background:#EEEEEE"></div>
<div class="t" style="left:205px;top:198.62px;font-size:12.5px;font-weight:400;color:#222;">0.00</div>
<div class="ab" style="left:294px;top:193px;width:90px;height:22px;border:1px solid #777;background:#EEEEEE"></div>
<div class="t" style="left:295px;top:198.62px;font-size:12.5px;font-weight:400;color:#222;">0.00</div>
<div class="ab" style="left:384px;top:193px;width:90px;height:22px;border:1px solid #777;background:#EEEEEE"></div>
<div class="t" style="left:385px;top:198.62px;font-size:12.5px;font-weight:400;color:#222;">0.00</div>
<div class="ab" style="left:474px;top:193px;width:90px;height:22px;border:1px solid #777;background:#EEEEEE"></div>
<div class="t" style="left:475px;top:198.62px;font-size:12.5px;font-weight:400;color:#222;">0.00</div>
<div class="ab" style="left:564px;top:193px;width:90px;height:22px;border:1px solid #777;background:#EEEEEE"></div>
<div class="t" style="left:565px;top:198.62px;font-size:12.5px;font-weight:400;color:#222;">0.00</div>
<div class="ab" style="left:654px;top:193px;width:90px;height:22px;border:1px solid #777;background:#EEEEEE"></div>
<div class="t" style="left:655px;top:198.62px;font-size:12.5px;font-weight:400;color:#222;">0.00</div>
<div class="t" style="left:18.8px;top:222.04px;font-size:12px;font-weight:700;color:#222;">Dark Days Disc.</div>
<div class="ab" style="left:114px;top:215px;width:90px;height:22px;border:1px solid #777;background:#EEEEEE"></div>
<div class="t" style="left:115px;top:220.62px;font-size:12.5px;font-weight:400;color:#222;">0.00</div>
<div class="ab" style="left:204px;top:215px;width:90px;height:22px;border:1px solid #777;background:#EEEEEE"></div>
<div class="t" style="left:205px;top:220.62px;font-size:12.5px;font-weight:400;color:#222;">0.00</div>
<div class="ab" style="left:294px;top:215px;width:90px;height:22px;border:1px solid #777;background:#EEEEEE"></div>
<div class="t" style="left:295px;top:220.62px;font-size:12.5px;font-weight:400;color:#222;">0.00</div>
<div class="ab" style="left:384px;top:215px;width:90px;height:22px;border:1px solid #777;background:#EEEEEE"></div>
<div class="t" style="left:385px;top:220.62px;font-size:12.5px;font-weight:400;color:#222;">0.00</div>
<div class="ab" style="left:474px;top:215px;width:90px;height:22px;border:1px solid #777;background:#EEEEEE"></div>
<div class="t" style="left:475px;top:220.62px;font-size:12.5px;font-weight:400;color:#222;">0.00</div>
<div class="ab" style="left:564px;top:215px;width:90px;height:22px;border:1px solid #777;background:#EEEEEE"></div>
<div class="t" style="left:565px;top:220.62px;font-size:12.5px;font-weight:400;color:#222;">0.00</div>
<div class="ab" style="left:654px;top:215px;width:90px;height:22px;border:1px solid #777;background:#EEEEEE"></div>
<div class="t" style="left:655px;top:220.62px;font-size:12.5px;font-weight:400;color:#222;">0.00</div>
<div class="t" style="left:18.8px;top:244.04px;font-size:12px;font-weight:700;color:#222;">Total Disc.</div>
<div class="ab" style="left:114px;top:237px;width:90px;height:22px;border:1px solid #777;background:#EEEEEE"></div>
<div class="t" style="left:115px;top:244.40px;font-size:10.4px;font-weight:400;color:#222;">0 (0%)</div>
<div class="ab" style="left:204px;top:237px;width:90px;height:22px;border:1px solid #777;background:#EEEEEE"></div>
<div class="t" style="left:205px;top:244.40px;font-size:10.4px;font-weight:400;color:#222;">0 (0%)</div>
<div class="ab" style="left:294px;top:237px;width:90px;height:22px;border:1px solid #777;background:#EEEEEE"></div>
<div class="t" style="left:295px;top:244.40px;font-size:10.4px;font-weight:400;color:#222;">0 (0%)</div>
<div class="ab" style="left:384px;top:237px;width:90px;height:22px;border:1px solid #777;background:#EEEEEE"></div>
<div class="t" style="left:385px;top:244.40px;font-size:10.4px;font-weight:400;color:#222;">0 (0%)</div>
<div class="ab" style="left:474px;top:237px;width:90px;height:22px;border:1px solid #777;background:#EEEEEE"></div>
<div class="t" style="left:475px;top:244.40px;font-size:10.4px;font-weight:400;color:#222;">0 (0%)</div>
<div class="ab" style="left:564px;top:237px;width:90px;height:22px;border:1px solid #777;background:#EEEEEE"></div>
<div class="t" style="left:565px;top:244.40px;font-size:10.4px;font-weight:400;color:#222;">0 (0%)</div>
<div class="ab" style="left:654px;top:237px;width:90px;height:22px;border:1px solid #777;background:#EEEEEE"></div>
<div class="t" style="left:655px;top:244.40px;font-size:10.4px;font-weight:700;color:#222;">0 (0%)</div>
<div class="t" style="left:18.8px;top:266.04px;font-size:12px;font-weight:700;color:#222;">MB Disc</div>
<div class="ab" style="left:114px;top:259px;width:90px;height:22px;border:1px solid #777;background:#EEEEEE"></div>
<div class="t" style="left:115px;top:266.40px;font-size:10.4px;font-weight:400;color:#222;">0.00</div>
<div class="ab" style="left:204px;top:259px;width:90px;height:22px;border:1px solid #777;background:#EEEEEE"></div>
<div class="t" style="left:205px;top:266.40px;font-size:10.4px;font-weight:400;color:#222;">0.00</div>
<div class="ab" style="left:294px;top:259px;width:90px;height:22px;border:1px solid #777;background:#EEEEEE"></div>
<div class="t" style="left:295px;top:266.40px;font-size:10.4px;font-weight:400;color:#222;">0.00</div>
<div class="ab" style="left:384px;top:259px;width:90px;height:22px;border:1px solid #777;background:#EEEEEE"></div>
<div class="t" style="left:385px;top:266.40px;font-size:10.4px;font-weight:400;color:#222;">0.00</div>
<div class="ab" style="left:474px;top:259px;width:90px;height:22px;border:1px solid #777;background:#EEEEEE"></div>
<div class="t" style="left:475px;top:266.40px;font-size:10.4px;font-weight:400;color:#222;">0.00</div>
<div class="ab" style="left:564px;top:259px;width:90px;height:22px;border:1px solid #777;background:#EEEEEE"></div>
<div class="t" style="left:565px;top:266.40px;font-size:10.4px;font-weight:400;color:#222;">0.00</div>
<div class="ab" style="left:654px;top:259px;width:90px;height:22px;border:1px solid #777;background:#EEEEEE"></div>
<div class="t" style="left:655px;top:266.40px;font-size:10.4px;font-weight:400;color:#222;">0.00</div>
<div class="t" style="left:18.8px;top:288.04px;font-size:12px;font-weight:700;color:#222;">Cost</div>
<div class="ab" style="left:114px;top:281px;width:90px;height:22px;border:1px solid #777;background:#EEEEEE"></div>
<div class="t" style="left:115px;top:286.62px;font-size:12.5px;font-weight:400;color:#222;">0.00</div>
<div class="ab" style="left:204px;top:281px;width:90px;height:22px;border:1px solid #777;background:#EEEEEE"></div>
<div class="t" style="left:205px;top:286.62px;font-size:12.5px;font-weight:400;color:#222;">0.00</div>
<div class="ab" style="left:294px;top:281px;width:90px;height:22px;border:1px solid #777;background:#EEEEEE"></div>
<div class="t" style="left:295px;top:286.62px;font-size:12.5px;font-weight:400;color:#222;">0.00</div>
<div class="ab" style="left:384px;top:281px;width:90px;height:22px;border:1px solid #777;background:#EEEEEE"></div>
<div class="t" style="left:385px;top:286.62px;font-size:12.5px;font-weight:400;color:#222;">50.00</div>
<div class="ab" style="left:474px;top:281px;width:90px;height:22px;border:1px solid #777;background:#EEEEEE"></div>
<div class="t" style="left:475px;top:286.62px;font-size:12.5px;font-weight:400;color:#222;">0.00</div>
<div class="ab" style="left:564px;top:281px;width:90px;height:22px;border:1px solid #777;background:#EEEEEE"></div>
<div class="t" style="left:565px;top:286.62px;font-size:12.5px;font-weight:400;color:#222;">50.00</div>
<div class="ab" style="left:654px;top:281px;width:90px;height:22px;border:1px solid #777;background:#EEEEEE"></div>
<div class="t" style="left:655px;top:286.62px;font-size:12.5px;font-weight:400;color:#222;">0.00</div>
<div class="t" style="left:18.8px;top:310.04px;font-size:12px;font-weight:700;color:#222;">Profit (Margin)</div>
<div class="ab" style="left:114px;top:303px;width:90px;height:22px;border:1px solid #777;background:#EEEEEE"></div>
<div class="t" style="left:115px;top:310.40px;font-size:10.4px;font-weight:400;color:#222;">0 (0%)</div>
<div class="ab" style="left:204px;top:303px;width:90px;height:22px;border:1px solid #777;background:#EEEEEE"></div>
<div class="t" style="left:205px;top:310.40px;font-size:10.4px;font-weight:400;color:#222;">0 (0%)</div>
<div class="ab" style="left:294px;top:303px;width:90px;height:22px;border:1px solid #777;background:#EEEEEE"></div>
<div class="t" style="left:295px;top:310.40px;font-size:10.4px;font-weight:400;color:#222;">0 (0%)</div>
<div class="ab" style="left:384px;top:303px;width:90px;height:22px;border:1px solid #777;background:#EEEEEE"></div>
<div class="t" style="left:385px;top:310.40px;font-size:10.4px;font-weight:400;color:#222;">50 (50%)</div>
<div class="ab" style="left:474px;top:303px;width:90px;height:22px;border:1px solid #777;background:#EEEEEE"></div>
<div class="t" style="left:475px;top:310.40px;font-size:10.4px;font-weight:400;color:#222;">0 (0%)</div>
<div class="ab" style="left:564px;top:303px;width:90px;height:22px;border:1px solid #777;background:#EEEEEE"></div>
<div class="t" style="left:565px;top:310.40px;font-size:10.4px;font-weight:400;color:#222;">50 (50%)</div>
<div class="ab" style="left:654px;top:303px;width:90px;height:22px;border:1px solid #777;background:#EEEEEE"></div>
<div class="t" style="left:655px;top:310.40px;font-size:10.4px;font-weight:400;color:#222;">0 (0%)</div>
<div class="ab" style="left:383px;top:301px;width:91px;height:26px;border:2px solid #B41A1A"></div>
<div class="t" style="left:794px;top:140.87px;font-size:12.2px;font-weight:400;color:#222;">Currency</div>
<div class="ab" style="left:854px;top:134px;width:100px;height:24px;border:1px solid #7C8EA8;background:#EEEEEE"></div>
<div class="ab" style="left:934px;top:135px;width:19px;height:22px;border-left:1px solid #7C8EA8;background:linear-gradient(#F4F7FB,#D3DCE8)"></div>
<svg class="ab" style="left:938px;top:142px" width="11" height="7" viewBox="0 0 11 7"><path d="M0.5 0.5 H10.5 L5.5 6 Z" fill="#111"/></svg>
<div class="t" style="left:857.5px;top:139.87px;font-size:12.2px;font-weight:400;color:#222;">Transaction</div>
<div class="ab" style="left:796px;top:164px;width:159px;height:23px;border:1px solid #B4B4B4;background:#fff"></div>
<div class="t" style="left:796.0px;width:160px;text-align:center;top:170.87px;font-size:12.2px;font-weight:400;color:#9E9E9E;">Distribute Revenue</div>
<div class="ab" style="left:766px;top:201px;width:235px;height:115px;border:1px solid #A8A8A8"></div>
<div class="ab" style="left:771px;top:196px;width:157px;height:10px;background:#fff"></div>
<div class="t" style="left:773px;top:197.04px;font-size:12px;font-weight:700;color:#111;">Compare With Actual Price</div>
<div class="t" style="left:774px;top:221.87px;font-size:12.2px;font-weight:400;color:#222;">Difference Amt</div>
<div class="ab" style="left:876px;top:216px;width:110px;height:24px;border:1px solid #777;background:#EEEEEE"></div>
<div class="t" style="left:774px;top:251.96px;font-size:12.1px;font-weight:400;color:#222;">% Of Difference</div>
<div class="ab" style="left:876px;top:246px;width:110px;height:24px;border:1px solid #777;background:#EEEEEE"></div>
<div class="ab" style="left:886px;top:281px;width:89px;height:23px;border:1px solid #B4B4B4;background:#fff"></div>
<div class="t" style="left:886.0px;width:89px;text-align:center;top:287.79px;font-size:12.3px;font-weight:400;color:#111;">C<u>a</u>lculate</div>
<div class="ab" style="left:8px;top:356px;width:1069px;height:315px;background:#C6DBF3;border-left:1px solid #5F84C8;border-top:1px solid #5F84C8;border-right:1px solid #7A8CA2;border-bottom:1px solid #7A8CA2"></div>
<div class="ab" style="left:9px;top:357px;width:1067px;height:1px;background:#fff"></div>
<div class="ab" style="left:11px;top:360px;width:1062px;height:307px;border:1px solid #A8A8A8;background:#fff"></div>
<svg class="ab" style="left:10px;top:334px" width="67" height="22" viewBox="0 0 67 22"><path d="M0.5 22 V6.5 L6.5 0.5 H66.5 V22" fill="#F99B4B" stroke="#8497AE" stroke-width="1"/><path d="M1.5 22 V7 L7 1.5 H65.5" fill="none" stroke="#FFFFFF" stroke-width="1"/></svg>
<div class="t" style="left:16px;top:339.79px;font-size:12.3px;font-weight:400;color:#000;">Item(s)</div>
<svg class="ab" style="left:76px;top:334px" width="59" height="23" viewBox="0 0 59 23"><path d="M0.5 23 V6.5 L6.5 0.5 H58.5 V23" fill="#C24B2B" stroke="#5F84C8" stroke-width="1"/><path d="M1.5 23 V7 L7 1.5 H57.5" fill="none" stroke="#FFFFFF" stroke-width="1"/></svg>
<div class="t" style="left:81.5px;top:340.04px;font-size:12px;font-weight:700;color:#fff;">Labor</div>
<div class="ab" style="left:77px;top:356px;width:57px;height:1px;background:#C24B2B"></div>
<div class="ab" style="left:77px;top:357px;width:57px;height:3px;background:#C6DBF3"></div>
<div class="ab" style="left:11px;top:667px;width:1063px;height:1px;background:#fff"></div>
<div class="ab" style="left:1073px;top:360px;width:1px;height:308px;background:#fff"></div>
<div class="ab" style="left:12px;top:362px;width:1059px;height:303px;border:1px solid #7E8EA4;background:#fff"></div>
<div class="ab" style="left:13px;top:363px;width:1057px;height:19px;background:#F86E3E"></div>
<div class="ab" style="left:13px;top:363px;width:1057px;height:1px;background:#8A3A20"></div>
<div class="ab" style="left:13px;top:364px;width:14px;height:18px;background:#C44B2B;border:1px solid #8A3A20;border-top-color:#FF7A48;border-left-color:#FF7A48"></div>
<div class="t" style="left:13.0px;width:14px;text-align:center;top:367.87px;font-size:12.2px;font-weight:400;color:#FFFFFF;">T</div>
<div class="ab" style="left:28px;top:364px;width:14px;height:18px;background:#C44B2B;border:1px solid #8A3A20;border-top-color:#FF7A48;border-left-color:#FF7A48"></div>
<div class="t" style="left:28.0px;width:14px;text-align:center;top:367.87px;font-size:12.2px;font-weight:400;color:#FFFFFF;">C</div>
<div class="ab" style="left:43px;top:364px;width:14px;height:18px;background:#C44B2B;border:1px solid #8A3A20;border-top-color:#FF7A48;border-left-color:#FF7A48"></div>
<div class="t" style="left:43.0px;width:14px;text-align:center;top:367.87px;font-size:12.2px;font-weight:400;color:#FFFFFF;">L</div>
<div class="ab" style="left:58px;top:364px;width:59px;height:18px;background:#C44B2B;border:1px solid #8A3A20;border-top-color:#FF7A48;border-left-color:#FF7A48"></div>
<div class="t" style="left:58.0px;width:59px;text-align:center;top:367.87px;font-size:12.2px;font-weight:400;color:#FFFFFF;">Action</div>
<div class="ab" style="left:118px;top:364px;width:79px;height:18px;background:#C44B2B;border:1px solid #8A3A20;border-top-color:#FF7A48;border-left-color:#FF7A48"></div>
<div class="t" style="left:118.0px;width:79px;text-align:center;top:367.87px;font-size:12.2px;font-weight:400;color:#FFFFFF;">Labor Id</div>
<div class="ab" style="left:198px;top:364px;width:259px;height:18px;background:#C44B2B;border:1px solid #8A3A20;border-top-color:#FF7A48;border-left-color:#FF7A48"></div>
<div class="t" style="left:198.0px;width:259px;text-align:center;top:367.87px;font-size:12.2px;font-weight:400;color:#FFFFFF;">Description</div>
<div class="ab" style="left:458px;top:364px;width:49px;height:18px;background:#C44B2B;border:1px solid #8A3A20;border-top-color:#FF7A48;border-left-color:#FF7A48"></div>
<div class="t" style="left:458.0px;width:49px;text-align:center;top:367.87px;font-size:12.2px;font-weight:400;color:#FFFFFF;">Qty</div>
<div class="ab" style="left:508px;top:364px;width:141px;height:18px;background:#C44B2B;border:1px solid #8A3A20;border-top-color:#FF7A48;border-left-color:#FF7A48"></div>
<div class="t" style="left:508.0px;width:141px;text-align:center;top:367.87px;font-size:12.2px;font-weight:400;color:#FFFFFF;">Tasks</div>
<div class="ab" style="left:650px;top:364px;width:119px;height:18px;background:#C44B2B;border:1px solid #8A3A20;border-top-color:#FF7A48;border-left-color:#FF7A48"></div>
<div class="t" style="left:650.0px;width:119px;text-align:center;top:367.87px;font-size:12.2px;font-weight:400;color:#FFFFFF;">Site Regular Rate</div>
<div class="ab" style="left:770px;top:364px;width:79px;height:18px;background:#C44B2B;border:1px solid #8A3A20;border-top-color:#FF7A48;border-left-color:#FF7A48"></div>
<div class="t" style="left:770.0px;width:79px;text-align:center;top:367.87px;font-size:12.2px;font-weight:400;color:#FFFFFF;">Regular Rate</div>
<div class="ab" style="left:850px;top:364px;width:79px;height:18px;background:#C44B2B;border:1px solid #8A3A20;border-top-color:#FF7A48;border-left-color:#FF7A48"></div>
<div class="t" style="left:850.0px;width:79px;text-align:center;top:367.87px;font-size:12.2px;font-weight:400;color:#FFFFFF;">Site OT Rate</div>
<div class="ab" style="left:930px;top:364px;width:59px;height:18px;background:#C44B2B;border:1px solid #8A3A20;border-top-color:#FF7A48;border-left-color:#FF7A48"></div>
<div class="t" style="left:930.0px;width:59px;text-align:center;top:367.87px;font-size:12.2px;font-weight:400;color:#FFFFFF;">OT Rate</div>
<div class="ab" style="left:990px;top:364px;width:79px;height:18px;background:#C44B2B;border:1px solid #8A3A20;border-top-color:#FF7A48;border-left-color:#FF7A48"></div>
<div class="t" style="left:990.0px;width:79px;text-align:center;top:367.87px;font-size:12.2px;font-weight:400;color:#FFFFFF;">Site DT Rate</div>
<div class="ab" style="left:13px;top:382px;width:1057px;height:19px;background:#FA9A4A"></div>
<div class="ab" style="left:13px;top:401px;width:1057px;height:1px;background:#D08848"></div>
<div class="ab" style="left:27px;top:382px;width:1px;height:19px;background:#C07838"></div>
<div class="ab" style="left:42px;top:382px;width:1px;height:19px;background:#C07838"></div>
<div class="ab" style="left:57px;top:382px;width:1px;height:19px;background:#C07838"></div>
<div class="ab" style="left:117px;top:382px;width:1px;height:19px;background:#C07838"></div>
<div class="ab" style="left:197px;top:382px;width:1px;height:19px;background:#C07838"></div>
<div class="ab" style="left:457px;top:382px;width:1px;height:19px;background:#C07838"></div>
<div class="ab" style="left:507px;top:382px;width:1px;height:19px;background:#C07838"></div>
<div class="ab" style="left:649px;top:382px;width:1px;height:19px;background:#C07838"></div>
<div class="ab" style="left:769px;top:382px;width:1px;height:19px;background:#C07838"></div>
<div class="ab" style="left:849px;top:382px;width:1px;height:19px;background:#C07838"></div>
<div class="ab" style="left:929px;top:382px;width:1px;height:19px;background:#C07838"></div>
<div class="ab" style="left:989px;top:382px;width:1px;height:19px;background:#C07838"></div>
<div class="ab" style="left:1069px;top:382px;width:1px;height:19px;background:#C07838"></div>
<div class="ab" style="left:14px;top:386px;width:12px;height:12px;background:#fff"></div>
<div class="ab" style="left:15px;top:387px;width:10px;height:10px;border:1px solid #8C9AAC;background:linear-gradient(135deg,#FFFFFF 0%,#F7C39C 40%,#EE8A4A 100%)"></div>
<div class="ab" style="left:29px;top:386px;width:12px;height:12px;background:#fff"></div>
<div class="ab" style="left:30px;top:387px;width:10px;height:10px;border:1px solid #8C9AAC;background:linear-gradient(135deg,#FFFFFF 0%,#F7C39C 40%,#EE8A4A 100%)"></div>
<div class="ab" style="left:44px;top:386px;width:12px;height:12px;background:#fff"></div>
<div class="ab" style="left:45px;top:387px;width:10px;height:10px;border:1px solid #8C9AAC;background:linear-gradient(135deg,#FFFFFF 0%,#F7C39C 40%,#EE8A4A 100%)"></div>
<svg class="ab" style="left:16px;top:388px" width="9" height="9" viewBox="0 0 9 9"><path d="M1.2 5 L2.8 7.8 L8 1.2" fill="none" stroke="#1A1A2A" stroke-width="2"/></svg>
<div class="t" style="left:59.5px;top:387.04px;font-size:12px;font-weight:400;color:#111;">Rent</div>
<div class="ab" style="left:118px;top:383px;width:79px;height:18px;border:1px solid #FF1010"></div>
<div class="t" style="left:118.6px;top:387.04px;font-size:12px;font-weight:400;color:#111;letter-spacing:-0.2px">AUDIOASSI...</div>
<div class="t" style="left:198.6px;top:387.04px;font-size:12px;font-weight:400;color:#111;letter-spacing:-0.1px">AUDIO ASSISTANT</div>
<div class="t" style="left:465.5px;width:40px;text-align:right;top:387.04px;font-size:12px;font-weight:400;color:#111;">1</div>
<div class="t" style="left:688px;width:80px;text-align:right;top:387.04px;font-size:12px;font-weight:400;color:#111;">100.00</div>
<div class="t" style="left:768px;width:80px;text-align:right;top:387.04px;font-size:12px;font-weight:400;color:#111;">100.00</div>
<div class="ab" style="left:13px;top:647px;width:1057px;height:1px;background:#7E90A8"></div>
<div class="ab" style="left:13px;top:648px;width:1057px;height:13px;background:#EEEEEE"></div>
<div class="ab" style="left:13px;top:661px;width:1057px;height:1px;background:#FFFFFF"></div>
<div class="ab" style="left:13px;top:662px;width:1057px;height:1px;background:#7E90A8"></div>
<div class="ab" style="left:13px;top:663px;width:1057px;height:1px;background:#C4D6F0"></div>
<div class="ab" style="left:13px;top:648px;width:2px;height:14px;background:#fff"></div>
<div class="ab" style="left:13px;top:648px;width:15px;height:1px;background:#fff"></div>
<svg class="ab" style="left:19px;top:652px" width="5" height="9" viewBox="0 0 5 9"><path d="M5 0 V9 L0 4.5 Z" fill="#222"/></svg>
<div class="ab" style="left:1053px;top:648px;width:1px;height:14px;background:#8A9AB0"></div>
<div class="ab" style="left:1054px;top:648px;width:15px;height:1px;background:#fff"></div>
<svg class="ab" style="left:1060px;top:652px" width="5" height="9" viewBox="0 0 5 9"><path d="M0 0 V9 L5 4.5 Z" fill="#222"/></svg>
<div class="ab" style="left:28px;top:647px;width:587px;height:16px;border:1px solid #FFC000;background:linear-gradient(160deg,#F3C8A6,#E79D6C);box-shadow:inset 0 0 0 1px #EBA47A"></div>
<div class="ab" style="left:615px;top:647px;width:1px;height:16px;background:#C4D6F0"></div>
<div class="ab" style="left:319px;top:651px;width:1px;height:8px;background:#B98060"></div>
<div class="ab" style="left:321px;top:651px;width:1px;height:8px;background:#B98060"></div>
<div class="ab" style="left:323px;top:651px;width:1px;height:8px;background:#B98060"></div>
<div class="t" style="left:70px;top:679.01px;font-size:14.4px;font-weight:700;color:#222;">Items</div>
<div class="ab" style="left:120px;top:673px;width:100px;height:24px;border:1px solid #777;background:#EEEEEE"></div>
<div class="t" style="left:121.2px;top:678.18px;font-size:14.2px;font-weight:700;color:#222;">$</div>
<div class="t" style="left:234px;top:679.01px;font-size:14.4px;font-weight:700;color:#222;">Labor</div>
<div class="ab" style="left:287px;top:673px;width:100px;height:24px;border:1px solid #777;background:#EEEEEE"></div>
<div class="t" style="left:288.2px;top:678.18px;font-size:14.2px;font-weight:700;color:#222;">$ 100.00</div>
<div class="t" style="left:445.5px;top:679.01px;font-size:14.4px;font-weight:700;color:#222;">Sub Total</div>
<div class="ab" style="left:525px;top:673px;width:100px;height:24px;border:1px solid #777;background:#EEEEEE"></div>
<div class="t" style="left:526.2px;top:678.18px;font-size:14.2px;font-weight:700;color:#222;">$ 100.00</div>
<div class="t" style="left:636px;top:679.01px;font-size:14.4px;font-weight:700;color:#222;">Tax</div>
<div class="ab" style="left:670px;top:673px;width:100px;height:24px;border:1px solid #777;background:#EEEEEE"></div>
<div class="t" style="left:671.2px;top:678.18px;font-size:14.2px;font-weight:700;color:#222;">$</div>
<div class="ab" style="left:813px;top:673px;width:89px;height:23px;border:1px solid #B4B4B4;background:#fff"></div>
<div class="t" style="left:814.0px;width:89px;text-align:center;top:679.18px;font-size:14.2px;font-weight:700;color:#111;">Total</div>
<div class="ab" style="left:906px;top:673px;width:100px;height:24px;border:1px solid #777;background:#EEEEEE"></div>
<div class="t" style="left:907.2px;top:678.18px;font-size:14.2px;font-weight:700;color:#111;">$ 100.00</div>
<div class="ab" style="left:9px;top:707px;width:1067px;height:24px;border:1px solid #C4C4C4;border-top:2px solid #878787;border-left-color:#8C8C8C;background:#fff"></div>
</body></html>
